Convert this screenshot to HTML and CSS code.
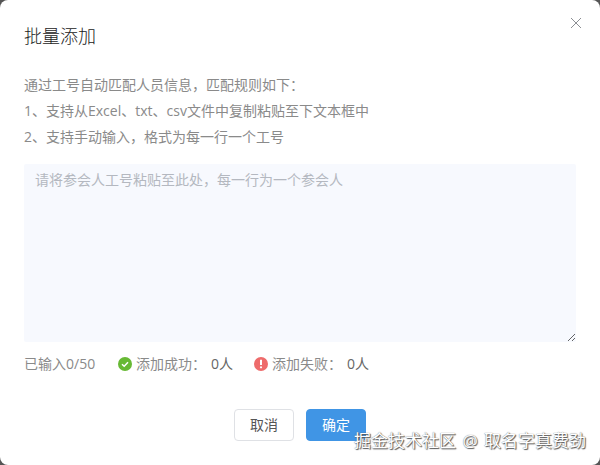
FILE: index.html
```html
<!DOCTYPE html>
<html lang="zh">
<head>
<meta charset="utf-8">
<title>批量添加</title>
<link rel="stylesheet" href="styles.css">
</head>
<body>
<div class="dialog">
  <button class="close" aria-label="关闭">
    <svg width="12" height="12" viewBox="0 0 12 12"><path d="M1 1L11 11M11 1L1 11" stroke="#8c8f94" stroke-width="1" fill="none"/></svg>
  </button>
  <h2 class="title">批量添加</h2>
  <div class="rules">
    <p>通过工号自动匹配人员信息，匹配规则如下：</p>
    <p>1、支持从Excel、txt、csv文件中复制粘贴至下文本框中</p>
    <p>2、支持手动输入，格式为每一行一个工号</p>
  </div>
  <textarea class="input" placeholder="请将参会人工号粘贴至此处，每一行为一个参会人"></textarea>
  <div class="stats">
    <span class="count">已输入0/50</span>
    <span class="stat">
      <svg class="icon" width="16" height="16" viewBox="0 0 16 16"><circle cx="8" cy="8" r="7" fill="#67b934"/><path d="M5 8.2L7.2 10.3L11 6.2" stroke="#fff" stroke-width="1.5" fill="none"/></svg>
      <span class="label">添加成功：</span><span class="num">0人</span>
    </span>
    <span class="stat">
      <svg class="icon" width="16" height="16" viewBox="0 0 16 16"><circle cx="8" cy="8" r="7" fill="#ee6b6b"/><path d="M8 3.8V9" stroke="#fff" stroke-width="2" fill="none"/><circle cx="8" cy="11.3" r="1.1" fill="#fff"/></svg>
      <span class="label">添加失败：</span><span class="num">0人</span>
    </span>
  </div>
  <div class="actions">
    <button class="btn">取消</button>
    <button class="btn primary">确定</button>
  </div>
</div>
<div class="watermark">掘金技术社区 @ 取名字真费劲</div>
</body>
</html>
```
FILE: styles.css
```css
* { box-sizing: border-box; }
html, body { margin: 0; height: 465px; overflow: hidden; }
body {
  background: #555;
  font-family: "Open Sans", "Noto Sans CJK SC", sans-serif;
  position: relative;
}
.dialog {
  width: 600px;
  height: 465px;
  background: #fff;
  border-radius: 8px;
  padding: 24px 24px 24px;
  position: relative;
  display: flex;
  flex-direction: column;
}
.close {
  position: absolute;
  top: 17px;
  right: 18px;
  width: 12px;
  height: 12px;
  padding: 0;
  border: 0;
  background: none;
  display: flex;
}
.title {
  margin: 0;
  font-size: 18px;
  line-height: 24px;
  font-weight: 300;
  color: #222;
}
.rules {
  margin-top: 24px;
  font-size: 14px;
  line-height: 26px;
  font-weight: 400;
  color: #8a8a8a;
}
.rules p { margin: 0; }
.input {
  display: block;
  width: 552px;
  height: 178px;
  margin-top: 14px;
  padding: 6px 11px;
  border: 0;
  outline: 0;
  border-radius: 2px;
  background: #f7f9fe;
  font-family: inherit;
  font-weight: 400;
  font-size: 14px;
  line-height: 20px;
  resize: vertical;
}
.input::placeholder { color: #b4b8c0; opacity: 1; }
.stats {
  display: flex;
  align-items: center;
  height: 20px;
  margin-top: 12px;
  font-size: 14px;
  line-height: 20px;
  font-weight: 400;
  color: #8a8a8a;
}
.count { width: 93px; }
.stat { display: flex; align-items: center; width: 136px; }
.icon { margin-right: 3px; }
.label { width: 75px; }
.num { color: #666; }
.actions {
  display: flex;
  justify-content: center;
  gap: 12px;
  margin-top: 35px;
}
.btn {
  width: 60px;
  height: 32px;
  padding: 0 0 2px;
  border: 1px solid #dfe1e5;
  border-radius: 4px;
  background: #fff;
  color: #555;
  font-family: inherit;
  font-size: 14px;
}
.primary {
  background: #4095e5;
  border-color: #4095e5;
  color: #fff;
}
.watermark {
  position: absolute;
  left: 354px;
  top: 430px;
  font-size: 17px;
  line-height: 22px;
  word-spacing: 2px;
  white-space: nowrap;
  color: #fff;
  text-shadow: 0 0 1px #555, 1px 1px 1px #555;
}
```
